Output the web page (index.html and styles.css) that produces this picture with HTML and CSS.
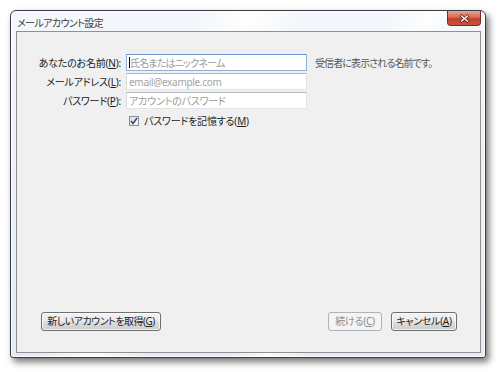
FILE: index.html
```html
<!DOCTYPE html>
<html lang="ja">
<head>
<meta charset="utf-8">
<title>メールアカウント設定</title>
<link rel="stylesheet" href="styles.css">
</head>
<body>
<div class="desk">
  <div class="window">
    <div class="titlebar">
      <span class="title">メールアカウント設定</span>
      <span class="close"><svg width="11" height="9" viewBox="0 0 11 9"><path d="M2.5 2 L8.5 7 M8.5 2 L2.5 7" stroke="#6a2418" stroke-width="3" stroke-linecap="square"/><path d="M2.5 2 L8.5 7 M8.5 2 L2.5 7" stroke="#ffffff" stroke-width="1.5" stroke-linecap="square"/></svg></span>
    </div>
    <div class="client">
      <div class="form">
        <label class="lbl">あなたのお名前(<u>N</u>):</label>
        <div class="field focus"><span class="caret"></span><span class="ph tight">氏名またはニックネーム</span></div>
        <span class="hint">受信者に表示される名前です。</span>

        <label class="lbl">メールアドレス(<u>L</u>):</label>
        <div class="field"><span class="ph latin">email@example.com</span></div>
        <span></span>

        <label class="lbl">パスワード(<u>P</u>):</label>
        <div class="field"><span class="ph">アカウントのパスワード</span></div>
        <span></span>

        <span></span>
        <div class="check">
          <span class="box"><svg width="8" height="8" viewBox="0 0 8 8"><path d="M1 4 L3 6.5 L7 1" fill="none" stroke="#2c4a7a" stroke-width="1.5"/></svg></span>
          <span>パスワードを記憶する(<u>M</u>)</span>
        </div>
        <span></span>
      </div>
      <div class="buttons">
        <button class="btn wide">新しいアカウントを取得(<u>G</u>)</button>
        <span class="spacer"></span>
        <button class="btn disabled">続ける(<u>C</u>)</button>
        <button class="btn cancel">キャンセル(<u>A</u>)</button>
      </div>
    </div>
  </div>
</div>
</body>
</html>
```

FILE: styles.css
```css
html, body {
  margin: 0;
  padding: 0;
  background: #ffffff;
}

body {
  font-family: "Noto Sans", "Noto Sans CJK JP", sans-serif;
  font-size: 10px;
  font-feature-settings: "palt";
  letter-spacing: -0.2px;
  color: #1e1e1e;
}

.desk {
  padding: 10px 0 0 10px;
  width: 500px;
  height: 372px;
  box-sizing: border-box;
}

.window {
  width: 476px;
  height: 348px;
  box-sizing: border-box;
  border: 1px solid #3a3d42;
  border-radius: 6px 6px 3px 3px;
  background:
    linear-gradient(115deg, rgba(255,255,255,0) 30%, rgba(255,255,255,0.9) 38%, rgba(255,255,255,0) 46%, rgba(255,255,255,0) 60%, rgba(255,255,255,0.8) 66%, rgba(255,255,255,0) 72%),
    linear-gradient(180deg, #f4f7fb 0%, #e6ecf3 100%);
  box-shadow: 3px 4px 7px rgba(0,0,0,0.55), inset 0 0 0 1px rgba(255,255,255,0.85);
  padding: 0 4px 4px 5px;
  display: flex;
  flex-direction: column;
}

.titlebar {
  height: 20px;
  display: flex;
  align-items: flex-start;
}

.title {
  margin-top: 4px;
  margin-left: 1px;
  color: #3c3c3c;
  letter-spacing: -0.6px;
}

.close {
  margin-left: auto;
  width: 34px;
  height: 15px;
  box-sizing: border-box;
  border: 1px solid #7a2a1e;
  border-top: none;
  border-radius: 0 0 4px 4px;
  background: linear-gradient(180deg, #e8a696 0%, #d66a55 45%, #c3402a 55%, #c9553f 100%);
  display: flex;
  align-items: center;
  justify-content: center;
}

.client {
  flex: 1;
  border: 1px solid #8d9194;
  background: #f0f0f0;
  display: flex;
  flex-direction: column;
  padding: 22px 23px 21px 24px;
}

.form {
  display: grid;
  grid-template-columns: 104px 181px auto;
  column-gap: 5px;
  row-gap: 2px;
  margin-left: -24px;
  align-items: center;
}

.lbl {
  text-align: right;
  white-space: nowrap;
  color: #1a1a1a;
}

.field {
  height: 17px;
  box-sizing: border-box;
  border: 1px solid #e2e3e5;
  border-top-color: #b5b7bc;
  border-left-color: #dadbde;
  background: #ffffff;
  display: flex;
  align-items: center;
  padding-left: 2px;
  overflow: hidden;
}

.field.focus {
  border-color: #8fb0d8;
  border-top-color: #6a98cc;
}

.caret {
  width: 1px;
  height: 11px;
  background: #000;
}

.ph {
  color: #9b9b9b;
  white-space: nowrap;
}

.ph.tight {
  letter-spacing: -0.8px;
}

.ph.latin {
  color: #a3a3a3;
  letter-spacing: -0.3px;
}

.hint {
  margin-left: 3px;
  color: #555555;
  white-space: nowrap;
  letter-spacing: -0.9px;
}

.check {
  display: flex;
  align-items: center;
  gap: 5px;
  margin-left: 3px;
  margin-top: 1px;
  height: 17px;
}

.box {
  width: 10px;
  height: 10px;
  box-sizing: border-box;
  border: 1px solid #8e8f8f;
  background: linear-gradient(135deg, #dcdcdc, #fbfbfb);
  display: flex;
  align-items: center;
  justify-content: center;
}

.buttons {
  margin-top: auto;
  display: flex;
  align-items: center;
  gap: 9px;
}

.spacer {
  flex: 1;
}

.btn {
  height: 19px;
  box-sizing: border-box;
  padding: 0;
  font: inherit;
  font-feature-settings: "palt";
  letter-spacing: -0.3px;
  color: #1e1e1e;
  border: 1px solid #707070;
  border-radius: 3px;
  background: linear-gradient(180deg, #f2f2f2 0%, #ebebeb 48%, #dddddd 52%, #cfcfcf 100%);
  box-shadow: inset 0 0 0 1px rgba(255,255,255,0.7);
  line-height: 15px;
  white-space: nowrap;
}

.btn.wide {
  width: 120px;
  letter-spacing: -0.5px;
}

.btn.disabled {
  width: 54px;
  color: #8d8d8d;
  border-color: #adb2b5;
  background: #f4f4f4;
  box-shadow: none;
}

.btn.cancel {
  width: 66px;
}
```
